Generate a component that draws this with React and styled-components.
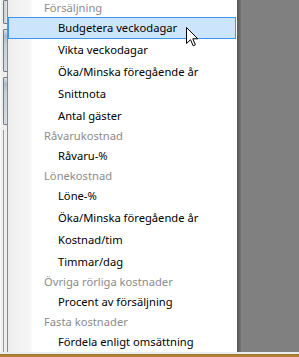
import React from "react";
import styled, { createGlobalStyle } from "styled-components";

const Global = createGlobalStyle`
  html, body { margin: 0; padding: 0; background: #808080; }
  body { font-family: "Noto Sans", "Open Sans", sans-serif; }
`;

const Screen = styled.div`
  width: 299px;
  height: 357px;
  display: flex;
  flex-direction: column;
  overflow: hidden;
  position: relative;
`;

const Main = styled.div`
  height: 352px;
  display: flex;
  flex-direction: row;
  overflow: hidden;
`;

const LeftStrip = styled.div`
  width: 7px;
  flex: none;
  background: #eeeeee;
  display: flex;
  flex-direction: column;
  gap: 5px;
  padding-left: 2px;
  box-sizing: border-box;
  border-left: 1px solid #f7f7f7;
`;

const StripButton = styled.div`
  width: 5px;
  height: ${(p) => p.$h}px;
  flex: none;
  box-sizing: border-box;
  border: 1px solid #6f7b86;
  border-radius: 1px;
  background: ${(p) =>
    p.$blue
      ? "linear-gradient(180deg, #dfe3e8 0px, #a9b9cc 6px, #c8d0d8 14px, #d8dce0 100%)"
      : "linear-gradient(90deg, #c9ced3, #e4e6e8)"};
`;

const StripLine = styled.div`
  flex: 1;
  width: 1px;
  background: #9a9a9a;
`;

const Menu = styled.div`
  width: 229px;
  flex: none;
  border-left: 1px solid #8a8a8a;
  background: linear-gradient(90deg, #ededed 0px, #f7f7f7 23px, #ffffff 24px, #ffffff 100%);
  display: flex;
  flex-direction: column;
  margin-top: -1px;
`;

const Header = styled.div`
  height: 18px;
  display: flex;
  align-items: center;
  padding-left: 36px;
  font-size: 11.2px;
  color: #8b8b8b;
  white-space: nowrap;
`;

const Item = styled.div`
  height: 22px;
  box-sizing: border-box;
  display: flex;
  align-items: center;
  padding-left: ${(p) => (p.$active ? 49 : 50)}px;
  margin-right: 1px;
  font-size: 11.2px;
  color: #000;
  white-space: nowrap;
  border: ${(p) => (p.$active ? "1px solid #3c98ee" : "none")};
  background: ${(p) => (p.$active ? "#cde5fc" : "transparent")};
`;

const Shadow = styled.div`
  width: 4px;
  flex: none;
  background: linear-gradient(90deg, #555555, #656565 50%, #747474);
`;

const Backdrop = styled.div`
  flex: 1;
  background: #808080;
`;

const BottomLight = styled.div`
  height: 2px;
  background: #ebebeb;
`;

const BottomEdge = styled.div`
  height: 3px;
  background: linear-gradient(180deg, #8c7a55 0px, #a7792c 1px, #b9842e 100%);
`;

const Cursor = styled.svg`
  position: absolute;
  left: 186px;
  top: 27px;
`;

const entries = [
  { h: "Försäljning" },
  { t: "Budgetera veckodagar", active: true },
  { t: "Vikta veckodagar" },
  { t: "Öka/Minska föregående år" },
  { t: "Snittnota" },
  { t: "Antal gäster" },
  { h: "Råvarukostnad" },
  { t: "Råvaru-%" },
  { h: "Lönekostnad" },
  { t: "Löne-%" },
  { t: "Öka/Minska föregående år" },
  { t: "Kostnad/tim" },
  { t: "Timmar/dag" },
  { h: "Övriga rörliga kostnader" },
  { t: "Procent av försäljning" },
  { h: "Fasta kostnader" },
  { t: "Fördela enligt omsättning" },
];

export default function App() {
  return (
    <>
      <Global />
      <Screen>
        <Main>
          <LeftStrip>
            <StripButton $h={24} />
            <StripButton $h={43} $blue />
            <StripButton $h={48} $blue />
            <StripLine />
          </LeftStrip>
          <Menu>
            {entries.map((e, i) =>
              e.h ? (
                <Header key={i}>{e.h}</Header>
              ) : (
                <Item key={i} $active={e.active}>
                  {e.t}
                </Item>
              )
            )}
          </Menu>
          <Shadow />
          <Backdrop />
        </Main>
        <BottomLight />
        <BottomEdge />
        <Cursor width="13" height="20" viewBox="0 0 13 20">
          <path
            d="M0.5 0.5 L0.5 16.5 L4.5 12.7 L7.2 18.8 L9.4 17.8 L6.8 11.8 L11.8 11.8 Z"
            fill="#ffffff"
            stroke="#000000"
            strokeWidth="1"
            strokeLinejoin="miter"
          />
        </Cursor>
      </Screen>
    </>
  );
}
